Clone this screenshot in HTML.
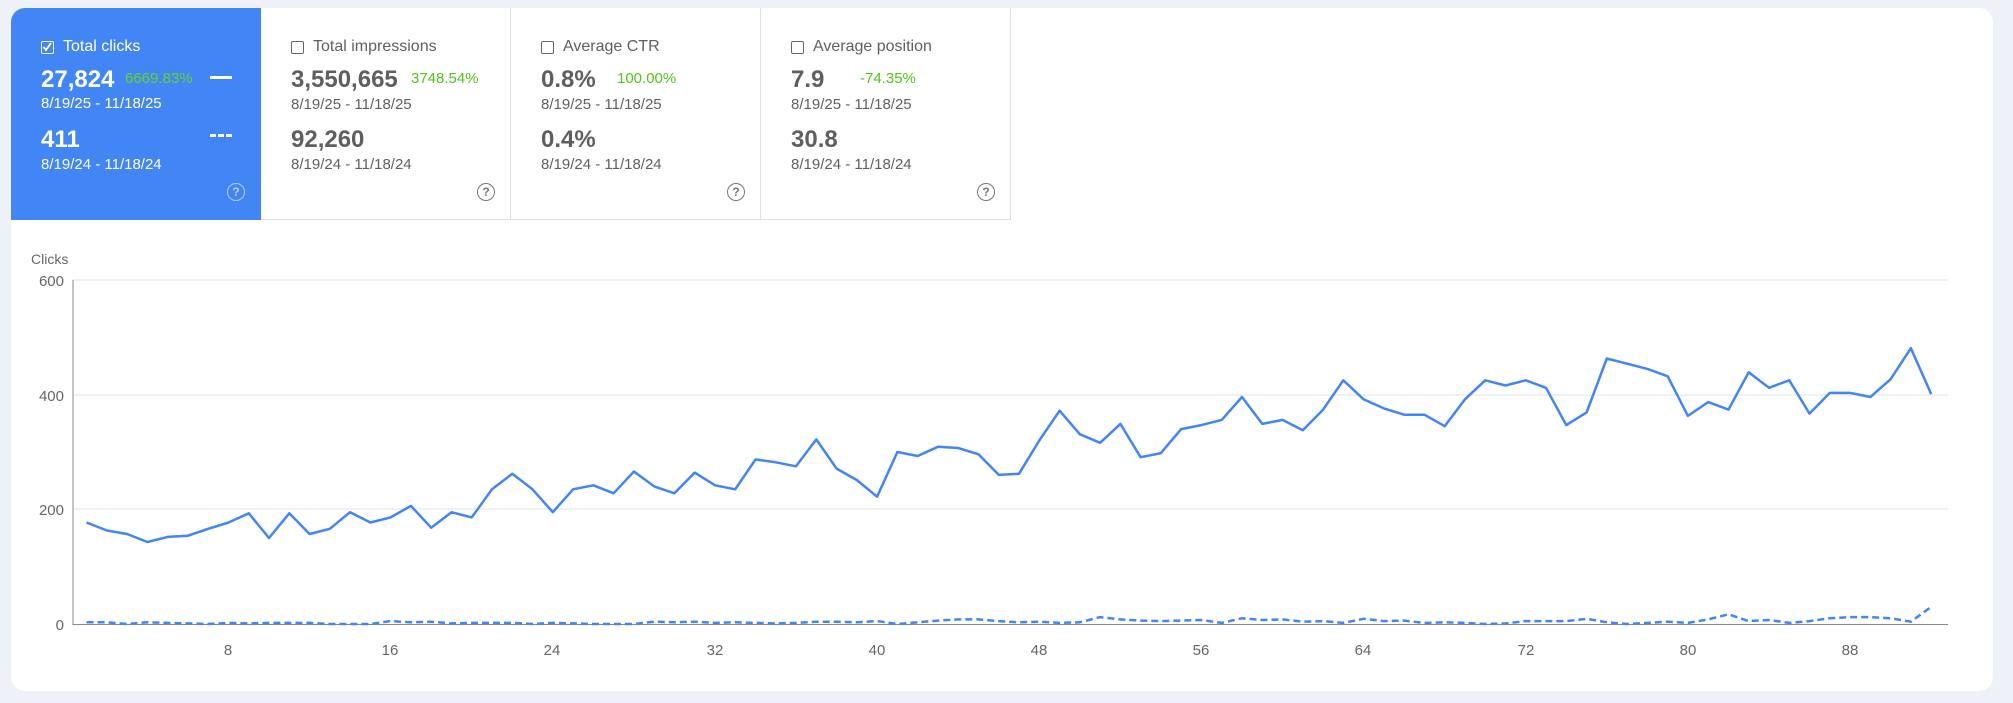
<!DOCTYPE html>
<html><head><meta charset="utf-8"><style>
body{margin:0;width:2013px;height:703px;background:#eef2f8;font-family:"Liberation Sans",Arial,sans-serif;overflow:hidden;position:relative}
.card{position:absolute;left:11px;top:8px;width:1982px;height:683px;background:#fff;border-radius:14px;overflow:hidden}
.tile{position:absolute;top:0;width:250px;height:212px;border-right:1px solid #e0e0e0;border-bottom:1px solid #e0e0e0;box-sizing:border-box;color:#5f5f5f}
.tile.sel{background:#4285f4;color:#fff;border:none}
.lab{position:absolute;left:30px;top:30px;font-size:16px;display:flex;align-items:center}
.cb{width:13px;height:13px;border:1.5px solid #666;border-radius:2px;margin-right:9px;box-sizing:border-box;position:relative}
.sel .cb{border-color:#fff}
.num{position:absolute;left:30px;font-size:24px;font-weight:bold}
.pct{position:absolute;font-size:15px;color:#52c41a}
.date{position:absolute;left:30px;font-size:15px}
.help{position:absolute;left:216px;top:175px;width:16px;height:16px;border:1.5px solid #777;border-radius:50%;font-size:12px;text-align:center;line-height:16px;color:#777;font-weight:bold}
.sel .help{border-color:#b8d0fb;color:#b8d0fb}
svg text{font-family:"Liberation Sans",Arial,sans-serif;font-size:15px;fill:#666}
</style></head><body>
<div class="card">
 <div class="tile sel" style="left:0">
  <div class="lab"><div class="cb"><svg width="10" height="10" style="position:absolute;left:0;top:0"><path d="M1.5 5 L4 8 L9 1" stroke="#fff" stroke-width="1.8" fill="none"/></svg></div>Total clicks</div>
  <div class="num" style="top:58px">27,824</div><div class="pct" style="left:114px;top:62px;color:#6bd12a">6669.83%</div>
  <div style="position:absolute;left:199px;top:68px;width:22px;height:3px;background:#fff"></div>
  <div class="date" style="top:87px">8/19/25 - 11/18/25</div>
  <div class="num" style="top:118px">411</div>
  <div style="position:absolute;left:199px;top:126px;width:22px;height:0;border-top:3px dashed #fff"></div>
  <div class="date" style="top:148px">8/19/24 - 11/18/24</div>
  <div class="help">?</div>
 </div>
 <div class="tile" style="left:250px">
  <div class="lab"><div class="cb"></div>Total impressions</div>
  <div class="num" style="top:58px">3,550,665</div><div class="pct" style="left:150px;top:62px">3748.54%</div>
  <div class="date" style="top:88px">8/19/25 - 11/18/25</div>
  <div class="num" style="top:118px">92,260</div>
  <div class="date" style="top:148px">8/19/24 - 11/18/24</div>
  <div class="help">?</div>
 </div>
 <div class="tile" style="left:500px">
  <div class="lab"><div class="cb"></div>Average CTR</div>
  <div class="num" style="top:58px">0.8%</div><div class="pct" style="left:106px;top:62px">100.00%</div>
  <div class="date" style="top:88px">8/19/25 - 11/18/25</div>
  <div class="num" style="top:118px">0.4%</div>
  <div class="date" style="top:148px">8/19/24 - 11/18/24</div>
  <div class="help">?</div>
 </div>
 <div class="tile" style="left:750px">
  <div class="lab"><div class="cb"></div>Average position</div>
  <div class="num" style="top:58px">7.9</div><div class="pct" style="left:99px;top:62px">-74.35%</div>
  <div class="date" style="top:88px">8/19/25 - 11/18/25</div>
  <div class="num" style="top:118px">30.8</div>
  <div class="date" style="top:148px">8/19/24 - 11/18/24</div>
  <div class="help">?</div>
 </div>
</div>
<svg id="ch" width="2013" height="703" style="position:absolute;left:0;top:0">
 <text x="31" y="264" style="font-size:14px">Clicks</text>
 <line x1="73" y1="280" x2="1948" y2="280" stroke="#ececec" stroke-width="1.5"/>
 <line x1="73" y1="395" x2="1948" y2="395" stroke="#ececec" stroke-width="1.5"/>
 <line x1="73" y1="509" x2="1948" y2="509" stroke="#ececec" stroke-width="1.5"/>
 <line x1="73" y1="280" x2="73" y2="625" stroke="#888" stroke-width="1"/>
 <line x1="73" y1="624.5" x2="1948" y2="624.5" stroke="#888" stroke-width="1"/>
 <text x="64" y="286" text-anchor="end">600</text>
 <text x="64" y="401" text-anchor="end">400</text>
 <text x="64" y="515" text-anchor="end">200</text>
 <text x="64" y="630" text-anchor="end">0</text>
 <text x="228" y="655" text-anchor="middle">8</text>
 <text x="390" y="655" text-anchor="middle">16</text>
 <text x="552" y="655" text-anchor="middle">24</text>
 <text x="715" y="655" text-anchor="middle">32</text>
 <text x="877" y="655" text-anchor="middle">40</text>
 <text x="1039" y="655" text-anchor="middle">48</text>
 <text x="1201" y="655" text-anchor="middle">56</text>
 <text x="1363" y="655" text-anchor="middle">64</text>
 <text x="1526" y="655" text-anchor="middle">72</text>
 <text x="1688" y="655" text-anchor="middle">80</text>
 <text x="1850" y="655" text-anchor="middle">88</text>
 <path id="p1" fill="none" stroke="#4285f4" stroke-width="2.5" stroke-linejoin="round"/>
 <path id="p2" fill="none" stroke="#4285f4" stroke-width="2.5" stroke-dasharray="7,4"/>
</svg>
<script>
var a=[177,163,157,143,152,154,166,177,193,150,193,157,166,195,177,186,206,168,195,186,235,262,235,195,235,242,228,266,240,228,264,242,235,287,282,275,322,271,251,222,300,293,309,307,296,260,262,320,372,331,316,349,291,298,340,347,356,396,349,356,338,374,425,392,376,365,365,345,392,425,416,425,412,347,369,463,454,445,432,363,387,374,439,412,425,367,403,403,396,427,481,401];
var b=[3,3,0,3,2,1,0,2,1,2,2,2,0,0,0,5,3,4,1,2,2,2,0,2,1,0,0,0,4,3,4,2,3,2,1,2,4,4,3,5,0,3,6,8,8,5,3,4,2,3,12,8,6,5,6,7,2,10,7,8,4,5,2,9,5,6,2,3,2,0,1,5,5,5,9,3,0,2,4,2,8,17,5,7,2,5,10,12,12,10,4,30];
function P(v){var d="";for(var i=0;i<v.length;i++){var x=86.6+i*20.27,y=624-v[i]*344/600;d+=(i?"L":"M")+x.toFixed(1)+" "+y.toFixed(1);}return d;}
document.getElementById("p1").setAttribute("d",P(a));
document.getElementById("p2").setAttribute("d",P(b));
</script>
</body></html>
